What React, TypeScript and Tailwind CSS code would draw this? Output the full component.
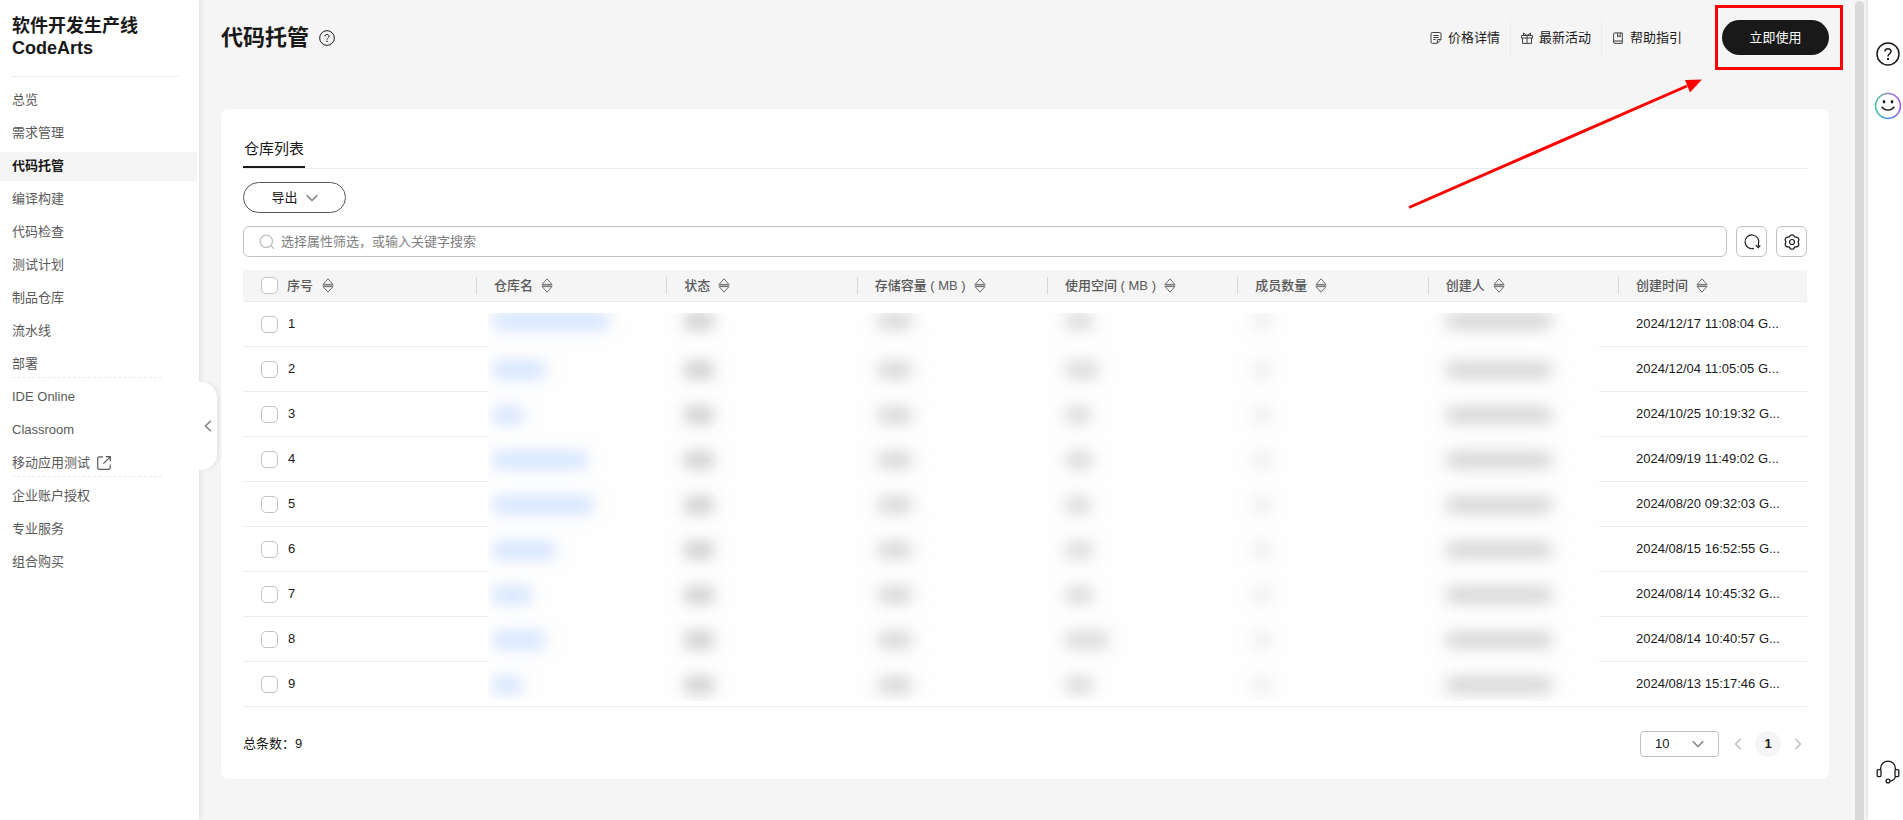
import { useState } from "react";
import type { ReactNode } from "react";

type NavItem = {
    label: string;
    external?: boolean;
    divider?: boolean;
};

const NAV_ITEMS: NavItem[] = [
    { label: "总览" },
    { label: "需求管理" },
    { label: "代码托管" },
    { label: "编译构建" },
    { label: "代码检查" },
    { label: "测试计划" },
    { label: "制品仓库" },
    { label: "流水线" },
    { label: "部署", divider: true },
    { label: "IDE Online" },
    { label: "Classroom" },
    { label: "移动应用测试", external: true, divider: true },
    { label: "企业账户授权" },
    { label: "专业服务" },
    { label: "组合购买" },
];

const COLUMNS = [
    "仓库名",
    "状态",
    "存储容量 ( MB )",
    "使用空间 ( MB )",
    "成员数量",
    "创建人",
    "创建时间",
];

// name / used are the widths of the masked values
const ROWS = [
    { id: 1, name: 114, used: 26, created: "2024/12/17 11:08:04 G..." },
    { id: 2, name: 50, used: 32, created: "2024/12/04 11:05:05 G..." },
    { id: 3, name: 28, used: 24, created: "2024/10/25 10:19:32 G..." },
    { id: 4, name: 92, used: 26, created: "2024/09/19 11:49:02 G..." },
    { id: 5, name: 98, used: 24, created: "2024/08/20 09:32:03 G..." },
    { id: 6, name: 60, used: 26, created: "2024/08/15 16:52:55 G..." },
    { id: 7, name: 36, used: 26, created: "2024/08/14 10:45:32 G..." },
    { id: 8, name: 50, used: 42, created: "2024/08/14 10:40:57 G..." },
    { id: 9, name: 26, used: 26, created: "2024/08/13 15:17:46 G..." },
];

/* Icons */

function HelpIcon({ className }: { className: string }) {
    return (
        <svg viewBox="0 0 24 24" fill="none" stroke="currentColor" strokeWidth="1.5" className={className}>
            <circle cx="12" cy="12" r="11" />
            <path d="M9 9.6C9 7.8 10.3 6.7 12 6.7s3 1.1 3 2.8c0 2.1-3 2.4-3 4.9" />
            <path d="M12 16v2" strokeWidth="2" />
        </svg>
    );
}

function ChevronIcon({ className }: { className: string }) {
    return (
        <svg viewBox="0 0 12 8" fill="none" stroke="currentColor" strokeWidth="1.5" className={className}>
            <path d="M0.7 1.2 6 6.5l5.3-5.3" />
        </svg>
    );
}

function SideChevron({ flip }: { flip?: boolean }) {
    return (
        <svg
            viewBox="0 0 8 12"
            fill="none"
            stroke="currentColor"
            strokeWidth="1.5"
            className={flip ? "h-3 w-2 rotate-180" : "h-3 w-2"}
        >
            <path d="M6.8 0.7 1.5 6l5.3 5.3" />
        </svg>
    );
}

function SortIcon() {
    return (
        <svg viewBox="0 0 12 15" fill="none" stroke="#6b6b6b" className="h-[15px] w-3">
            <path d="M6 0.8 10.9 6.4H1.1z" strokeLinejoin="round" />
            <path d="M6 14.2 1.1 8.6h9.8z" strokeLinejoin="round" />
            <path d="M0.5 7.5h11" stroke="#b0b0b0" />
        </svg>
    );
}

function PriceIcon() {
    return (
        <svg viewBox="0 0 12 12" fill="none" stroke="#404040" className="size-3">
            <path d="M2.2 .5h7.6q1.2 0 1.2 1.2V7.5L7.4 11.3H2.2Q1 11.3 1 10.1V1.7Q1 .5 2.2 .5z" />
            <path d="M3.3 3.5h5.4M3.3 5.5h5.4M3.3 7.5h2.4M7.4 11V8q0-.5.5-.5h3" />
        </svg>
    );
}

function GiftIcon() {
    return (
        <svg viewBox="0 0 12 12" fill="none" stroke="#404040" className="size-3">
            <path d="M.5 3.5h11V6H.5zM1.5 6v5.4h9V6M6 3.5v7.9" />
            <path d="M6 3.5 2.5 3.3V1L6 3.5 9.5 1v2.3z" strokeLinejoin="round" />
        </svg>
    );
}

function GuideIcon() {
    return (
        <svg viewBox="0 0 12 12" fill="none" stroke="#404040" className="size-3">
            <path d="M10.3 9V.9H2.8q-1.2 0-1.2 1.2v8M10.3 9H2.8q-1.2 0-1.2 1.2 0 1.1 1.2 1.1h7.5z" />
            <path d="M5.6.9v4l1.3-1 1.3 1v-4" />
        </svg>
    );
}

function ExternalIcon() {
    return (
        <svg viewBox="0 0 14 14" fill="none" stroke="currentColor" strokeWidth="1.2" className="size-3.5">
            <path d="M6 .8H2.6Q.7.8.7 2.7v8.7q0 1.9 1.9 1.9h8.7q1.9 0 1.9-1.9V8.4" />
            <path d="M8.8.7h4.5v4.5M13.1.9 6.4 7.6" />
        </svg>
    );
}

function SearchIcon() {
    return (
        <svg viewBox="0 0 16 16" fill="none" stroke="#c2c2c2" strokeWidth="1.3" className="size-4">
            <circle cx="7.3" cy="7.3" r="6.2" />
            <path d="m11.8 11.8 3.4 3" />
        </svg>
    );
}

function RefreshIcon() {
    return (
        <svg viewBox="0 0 18 18" fill="none" stroke="#191919" strokeWidth="1.2" className="size-[18px]">
            <path d="M11 15.4A6.9 6.9 0 1 1 15.4 11.2V13.6" />
            <path d="M12.8 12.2 15.2 14.6 17.3 12.4" />
        </svg>
    );
}

function SettingIcon() {
    return (
        <svg viewBox="0 0 18 18" fill="none" stroke="#191919" strokeWidth="1.2" strokeLinejoin="round" className="size-[18px]">
            <path d="M6.7 3.2C7.3 1.3 10.7 1.3 11.3 3.2 11.6 4 12.3 4.3 13.1 4.1 15.1 3.7 16.7 6.5 15.4 8 14.9 8.6 14.9 9.4 15.4 10 16.7 11.5 15.1 14.3 13.1 13.9 12.3 13.7 11.6 14 11.3 14.8 10.7 16.7 7.3 16.7 6.7 14.8 6.4 14 5.7 13.7 4.9 13.9 2.9 14.3 1.3 11.5 2.6 10 3.1 9.4 3.1 8.6 2.6 8 1.3 6.5 2.9 3.7 4.9 4.1 5.7 4.3 6.4 4 6.7 3.2z" />
            <circle cx="9" cy="9" r="2.5" />
        </svg>
    );
}

function SmileIcon() {
    return (
        <svg viewBox="0 0 28 28" fill="none" className="size-7">
            <defs>
                <linearGradient id="smile-top" x1="0" y1="0" x2="1" y2="0">
                    <stop offset="0" stopColor="#3cc48a" />
                    <stop offset="0.5" stopColor="#8a86c4" />
                    <stop offset="1" stopColor="#b04be0" />
                </linearGradient>
                <linearGradient id="smile-bottom" x1="0" y1="0" x2="1" y2="0">
                    <stop offset="0" stopColor="#3cc4a0" />
                    <stop offset="0.45" stopColor="#3a8ff0" />
                    <stop offset="1" stopColor="#8a5cf0" />
                </linearGradient>
            </defs>
            <path d="M1.6 14a12.4 12.4 0 0 1 24.8 0" stroke="url(#smile-top)" strokeWidth="1.5" />
            <path d="M1.6 14a12.4 12.4 0 0 0 24.8 0" stroke="url(#smile-bottom)" strokeWidth="1.5" />
            <ellipse cx="10" cy="9.8" rx="1.3" ry="1.7" fill="#191919" />
            <ellipse cx="18" cy="9.8" rx="1.3" ry="1.7" fill="#191919" />
            <path d="M7.8 14.6c2.6 4.6 9.8 4.6 12.4 0" stroke="#191919" strokeWidth="1.4" />
        </svg>
    );
}

function HeadsetIcon() {
    return (
        <svg viewBox="0 0 24 24" fill="none" stroke="#191919" strokeWidth="1.3" className="size-6">
            <path d="M4.6 10V8.5a7.4 7.4 0 0 1 14.8 0V10" />
            <rect x="1.2" y="9.6" width="3.8" height="7" rx="1" />
            <rect x="19" y="9.6" width="3.8" height="7" rx="1" />
            <path d="M19.4 16.6c-.6 2.6-2.6 4-5.2 4.4" />
            <circle cx="12" cy="21" r="1.9" />
        </svg>
    );
}

/* Layout pieces */

function Sidebar() {

    const [active, setActive] = useState("代码托管");

    return (

        <aside className="relative z-10 w-[199px] shrink-0 bg-white shadow-[1px_0_6px_rgba(0,0,0,0.1)]">

            <h2 className="mx-3 mr-5 border-b border-[#ebebeb] pt-[15px] pb-[17px] text-lg leading-[22px] font-bold text-[#191919]">
                软件开发生产线
                <br />
                CodeArts
            </h2>

            <ul className="mt-[9px]">

                {NAV_ITEMS.map((item) => (

                    <li
                        key={item.label}
                        className={`mr-0.5 mb-1 h-[29px] pl-3 ${item.label === active ? "bg-[#f5f5f5]" : ""}`}
                    >

                        <a
                            href="#"
                            onClick={() => setActive(item.label)}
                            className={`
                                flex
                                h-7
                                w-[150px]
                                items-center
                                gap-[7px]
                                border-b
                                border-dashed
                                text-[13px]
                                leading-5
                                ${item.divider ? "border-[#ebebeb]" : "border-transparent"}
                                ${item.label === active ? "font-bold text-[#191919]" : "text-[#595959]"}
                            `}
                        >
                            {item.label}
                            {item.external && <ExternalIcon />}
                        </a>

                    </li>

                ))}

            </ul>

            <button
                aria-label="收起"
                className="
                    absolute
                    top-[382px]
                    left-full
                    flex
                    h-[88px]
                    w-[18px]
                    items-center
                    justify-center
                    rounded-r-2xl
                    bg-white
                    text-[#808080]
                    shadow-[3px_0_4px_rgba(0,0,0,0.06)]
                "
            >
                <SideChevron />
            </button>

        </aside>

    );

}

function HeaderLink({ icon, children }: { icon: ReactNode; children: ReactNode }) {
    return (
        <a
            href="#"
            className="
                flex
                h-[37px]
                items-center
                gap-1.5
                border-l
                border-[#ebebeb]
                px-2.5
                text-[13px]
                text-[#191919]
                first:border-transparent
            "
        >
            {icon}
            {children}
        </a>
    );
}

function PageHeader() {

    return (

        <header className="relative mb-[34px] flex h-[75px] items-center">

            <h1 className="text-[22px] font-bold text-[#191919]">代码托管</h1>

            <button aria-label="帮助" className="ml-2.5 text-[#191919]">
                <HelpIcon className="size-4" />
            </button>

            <nav className="ml-auto flex">
                <HeaderLink icon={<PriceIcon />}>价格详情</HeaderLink>
                <HeaderLink icon={<GiftIcon />}>最新活动</HeaderLink>
                <HeaderLink icon={<GuideIcon />}>帮助指引</HeaderLink>
            </nav>

            <div className="relative ml-[30px]">

                <button className="h-[35px] w-[107px] rounded-full bg-[#191919] text-[13px] text-white">
                    立即使用
                </button>

                <div className="pointer-events-none absolute -top-[15px] -right-[14px] -bottom-[15px] -left-[7px] border-3 border-[#f00]" />

            </div>

            {/* Pointer to the start button */}

            <svg
                viewBox="0 0 300 140"
                className="pointer-events-none absolute top-[72px] right-[123px] z-20 h-[140px] w-[300px]"
            >
                <path d="M3 135.5 281 14" stroke="#f00" strokeWidth="3" />
                <path d="M296 7.5 279 8l5 12.5z" fill="#f00" />
            </svg>

        </header>

    );

}

function Checkbox({ label }: { label: string }) {
    return (
        <input
            type="checkbox"
            aria-label={label}
            className="size-[17px] shrink-0 appearance-none rounded-[5px] border border-[#c2c2c2] bg-white checked:bg-[#191919]"
        />
    );
}

// Covers the private columns with a blurred block per value.
function PrivacyMask() {

    return (

        <div
            aria-hidden="true"
            className="absolute top-[43px] right-[208px] bottom-[6px] left-[245px] overflow-hidden bg-[#fefefe]"
        >

            <div className="-mt-[11px] -mr-[38px] ml-1.5">

                {ROWS.map((row) => (

                    <div
                        key={row.id}
                        className="grid h-[45px] grid-cols-6 items-center first:pb-2 [&>div]:h-3.5 [&>div]:blur-[8px]"
                    >
                        <div className="bg-[#c8ddff]" style={{ width: row.name }} />
                        <div className="w-7 bg-[#c2c2c2]" />
                        <div className="ml-1 w-8 bg-[#cecece]" />
                        <div className="bg-[#d2d2d2]" style={{ width: row.used }} />
                        <div className="w-3 bg-[#e4e4e4]" />
                        <div className="w-[104px] bg-[#cdcdcd]" />
                    </div>

                ))}

            </div>

        </div>

    );

}

function RepoTable() {

    return (

        <div className="relative mt-[13px]">

            <table className="w-full table-fixed border-separate border-spacing-0 text-[13px] leading-5">

                <thead>

                    <tr className="h-8 bg-[#f5f5f5] text-[#595959]">

                        <th className="w-[233px] border-b border-[#ebebeb] p-0">
                            <div className="flex items-center gap-[9px] pl-[18px] font-medium">
                                <Checkbox label="全选" />
                                序号
                                <SortIcon />
                            </div>
                        </th>

                        {COLUMNS.map((column) => (
                            <th key={column} className="border-b border-[#ebebeb] p-0 last:w-[189px]">
                                <div className="flex h-[17px] items-center gap-2 border-l border-[#d6d6d6] pl-[17px] font-medium">
                                    {column}
                                    <SortIcon />
                                </div>
                            </th>
                        ))}

                    </tr>

                </thead>

                <tbody className="text-[#191919]">

                    {ROWS.map((row) => (

                        <tr key={row.id} className="h-[45px] [&>td]:border-b [&>td]:border-[#ebebeb] [&>td]:p-0 [&>td]:pl-[18px]">
                            <td>
                                <div className="flex items-center gap-2.5">
                                    <Checkbox label={`选择 ${row.id}`} />
                                    {row.id}
                                </div>
                            </td>
                            <td colSpan={6} />
                            <td className="truncate">{row.created}</td>
                        </tr>

                    ))}

                </tbody>

            </table>

            <PrivacyMask />

        </div>

    );

}

function Pagination() {

    return (

        <div className="mt-6 flex items-center text-[13px] text-[#191919]">

            <span>总条数：9</span>

            <div className="relative ml-auto">

                <select
                    aria-label="每页条数"
                    className="block h-[26px] w-[79px] appearance-none rounded-[4px] border border-[#c2c2c2] bg-white pl-3.5"
                >
                    <option>10</option>
                    <option>20</option>
                    <option>50</option>
                </select>

                <ChevronIcon className="pointer-events-none absolute top-[9px] right-[15px] h-2 w-3 text-[#808080]" />

            </div>

            <button aria-label="上一页" className="ml-[15px] text-[#c2c2c2]">
                <SideChevron />
            </button>

            <button className="mx-[13px] size-[26px] rounded-full bg-[#f5f5f5] font-bold">1</button>

            <button aria-label="下一页" className="mr-[5px] text-[#c2c2c2]">
                <SideChevron flip />
            </button>

        </div>

    );

}

export default function App() {

    return (

        <div className='flex h-screen overflow-hidden bg-[#f5f5f5] font-["Liberation_Sans","Noto_Sans_CJK_SC",sans-serif]'>

            <Sidebar />

            <main className="min-w-0 flex-1 pr-[26px] pl-[22px]">

                <PageHeader />

                <section className="rounded-lg bg-white px-[22px] pt-[29px] pb-[22px]">

                    <div role="tablist" className="flex border-b border-[#ebebeb]">
                        <button
                            role="tab"
                            aria-selected="true"
                            className="border-b-2 border-[#191919] px-px pb-1.5 text-[15px] leading-[22px] text-[#191919]"
                        >
                            仓库列表
                        </button>
                    </div>

                    <button
                        className="
                            mt-[13px]
                            flex
                            h-[31px]
                            w-[103px]
                            items-center
                            justify-center
                            gap-2
                            rounded-full
                            border
                            border-[#595959]
                            text-[13px]
                            text-[#191919]
                        "
                    >
                        导出
                        <ChevronIcon className="h-2 w-3 text-[#808080]" />
                    </button>

                    <div className="mt-[13px] flex gap-[9px]">

                        <label className="flex h-[31px] flex-1 items-center gap-1.5 rounded-md border border-[#c2c2c2] px-[15px]">
                            <SearchIcon />
                            <input
                                type="text"
                                aria-label="搜索"
                                placeholder="选择属性筛选，或输入关键字搜索"
                                className="flex-1 text-[13px] outline-none placeholder:text-[#808080]"
                            />
                        </label>

                        <button
                            aria-label="刷新"
                            className="flex size-[31px] items-center justify-center rounded-md border border-[#c2c2c2]"
                        >
                            <RefreshIcon />
                        </button>

                        <button
                            aria-label="设置"
                            className="flex size-[31px] items-center justify-center rounded-md border border-[#c2c2c2]"
                        >
                            <SettingIcon />
                        </button>

                    </div>

                    <RepoTable />

                    <Pagination />

                </section>

            </main>

            {/* Scrollbar */}

            <div className="mt-px w-[9px] shrink-0 rounded-t-full bg-[#d9d9d9]" />

            <aside className="ml-1 flex w-[35px] shrink-0 flex-col items-center bg-white pt-[42px] pb-9 pl-1 shadow-[0_0_4px_rgba(0,0,0,0.15)]">

                <button aria-label="帮助中心" className="text-[#191919]">
                    <HelpIcon className="size-6" />
                </button>

                <button aria-label="反馈" className="mt-[26px]">
                    <SmileIcon />
                </button>

                <button aria-label="在线客服" className="mt-auto">
                    <HeadsetIcon />
                </button>

            </aside>

        </div>

    );

}
